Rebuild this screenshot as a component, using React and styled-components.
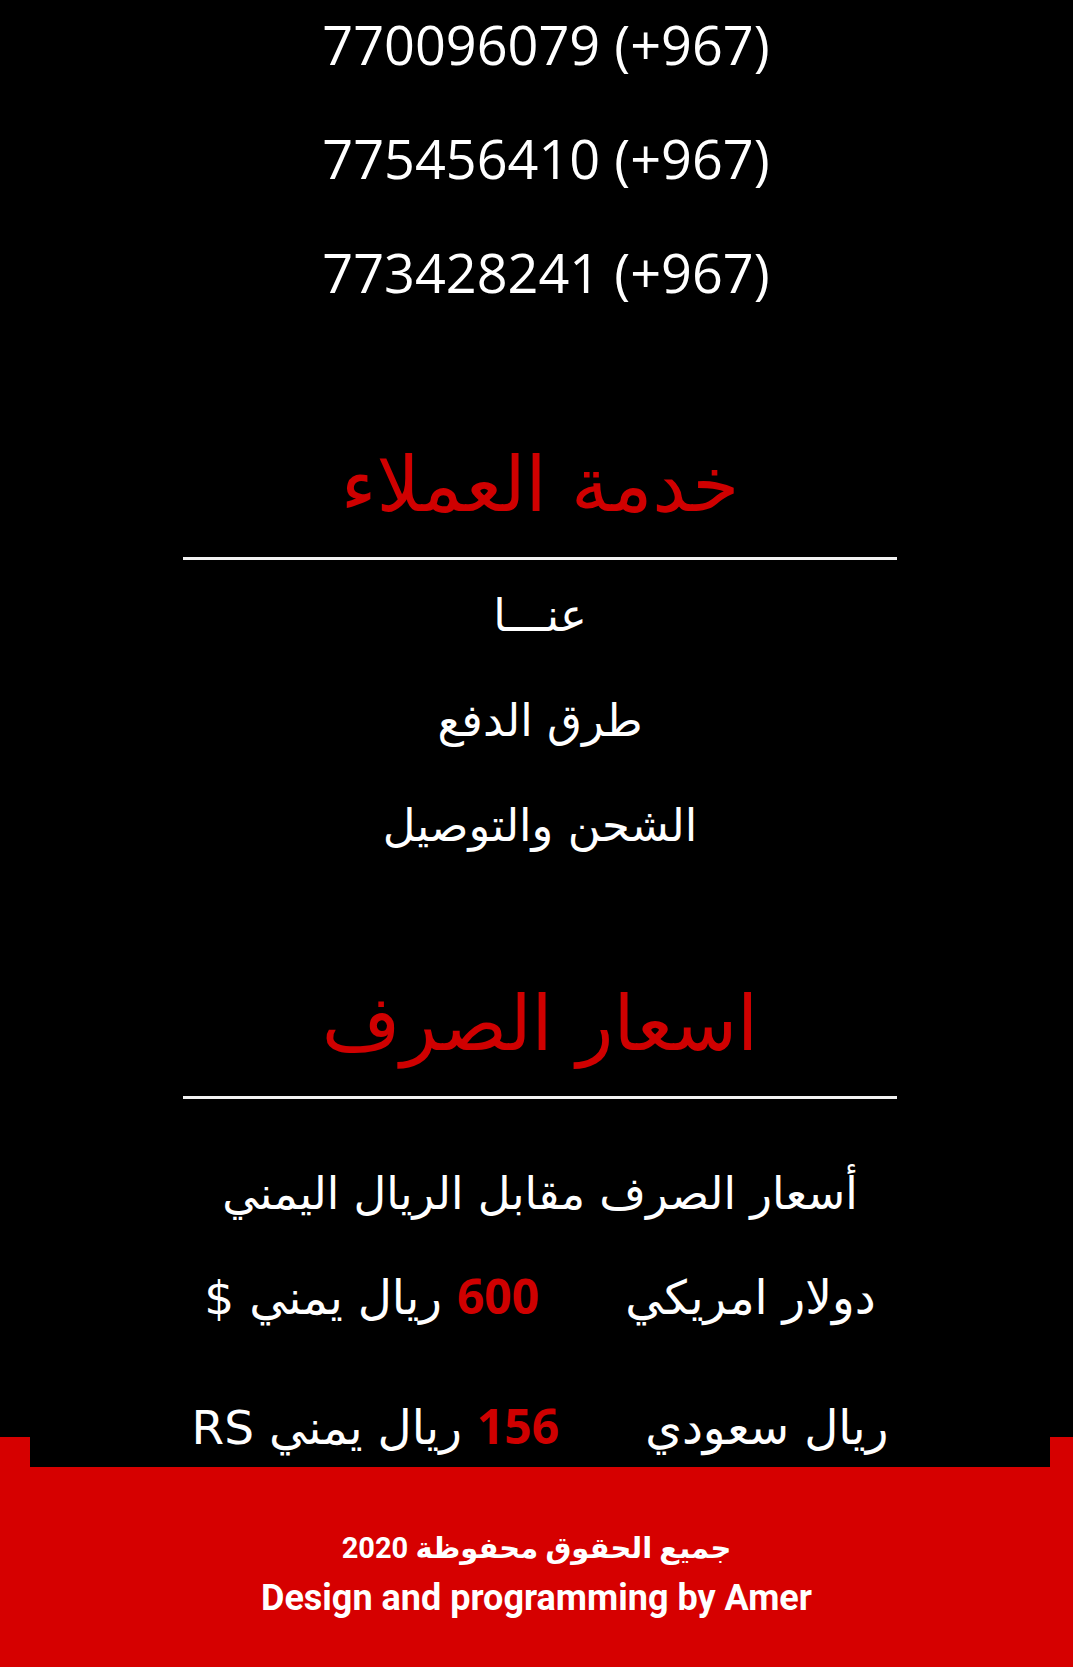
import React from "react";
import styled, { createGlobalStyle } from "styled-components";

const GlobalStyle = createGlobalStyle`
  html, body { margin: 0; padding: 0; background: #ffffff; }
  body { font-family: "Open Sans", "DejaVu Sans", sans-serif; }
  * { box-sizing: border-box; }
`;

const Page = styled.div`
  background: #000;
  display: flex;
  flex-direction: column;
`;

const Content = styled.main`
  position: relative;
  z-index: 1;
  margin: 0 23px -30px 30px;
  padding-bottom: 4px;
  background: #000;
  color: #fff;
  text-align: center;
  direction: rtl;
  overflow: hidden;
`;

const Phones = styled.ul`
  list-style: none;
  margin: 0;
  padding: 12px 0 0 12px;
  display: flex;
  flex-direction: column;
  gap: 50px;
  direction: ltr;
`;

const Phone = styled.li`
  font-family: "Open Sans", sans-serif;
  font-size: 54px;
  line-height: 64px;
`;

const Section = styled.section`
  display: flex;
  flex-direction: column;
  align-items: center;
  margin-top: ${(p) => p.$top}px;
`;

const Heading = styled.h2`
  margin: 0;
  color: #cf0000;
  font-family: "DejaVu Sans", sans-serif;
  font-weight: normal;
  font-size: 76px;
  line-height: 100px;
`;

const Rule = styled.hr`
  width: 714px;
  height: 3px;
  border: 0;
  margin: 22px 0 0;
  background: #f2f2f2;
`;

const Links = styled.ul`
  list-style: none;
  margin: 0;
  padding: 26px 0 0;
  display: flex;
  flex-direction: column;
  gap: 45px;
`;

const LinkItem = styled.li`
  font-family: "DejaVu Sans", sans-serif;
  font-size: 45px;
  line-height: 60px;
`;

const Text = styled.p`
  margin: ${(p) => p.$top || 0}px 0 0;
  font-family: "DejaVu Sans", sans-serif;
  font-size: 45px;
  line-height: 70px;
`;

const Rate = styled.div`
  display: flex;
  justify-content: center;
  align-items: baseline;
  gap: 86px;
  margin-top: ${(p) => p.$top}px;
  font-family: "DejaVu Sans", sans-serif;
  font-size: 47px;
  line-height: 70px;
`;

const Amount = styled.span`
  font-family: "Open Sans", sans-serif;
  font-weight: 700;
  font-size: 48px;
  letter-spacing: 3px;
  color: #cf0000;
`;

const Footer = styled.footer`
  background: #d60000;
  color: #fff;
  text-align: center;
  padding: 86px 0 44px;
  font-family: Roboto, "DejaVu Sans", sans-serif;
  font-weight: 700;
`;

const FooterLine = styled.p`
  margin: 0;
  font-size: ${(p) => p.$size}px;
  line-height: 50px;
  direction: ${(p) => p.$dir};
`;

export default function App() {
  return (
    <>
      <GlobalStyle />
      <Page>
        <Content>
          <Phones>
            <Phone>770096079 (+967)</Phone>
            <Phone>775456410 (+967)</Phone>
            <Phone>773428241 (+967)</Phone>
          </Phones>

          <Section $top={131}>
            <Heading>خدمة العملاء</Heading>
            <Rule />
            <Links>
              <LinkItem>عنـــا</LinkItem>
              <LinkItem>طرق الدفع</LinkItem>
              <LinkItem>الشحن والتوصيل</LinkItem>
            </Links>
          </Section>

          <Section $top={118}>
            <Heading>اسعار الصرف</Heading>
            <Rule />
            <Text $top={60}>أسعار الصرف مقابل الريال اليمني</Text>
            <Rate $top={32}>
              <span>دولار امريكي</span>
              <span>
                <Amount>600</Amount> ريال يمني $
              </span>
            </Rate>
            <Rate $top={58}>
              <span>ريال سعودي</span>
              <span>
                <Amount>156</Amount> ريال يمني RS
              </span>
            </Rate>
          </Section>
        </Content>
        <Footer>
          <FooterLine $size={29} $dir="rtl">جميع الحقوق محفوظة 2020</FooterLine>
          <FooterLine $size={36} $dir="ltr">Design and programming by Amer</FooterLine>
        </Footer>
      </Page>
    </>
  );
}
